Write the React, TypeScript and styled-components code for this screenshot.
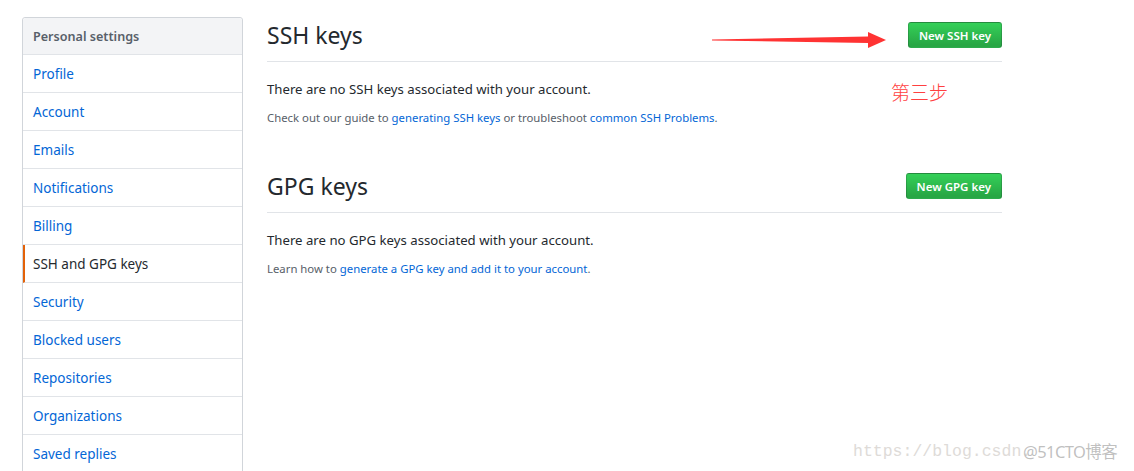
import React from "react";
import styled, { createGlobalStyle } from "styled-components";

const Global = createGlobalStyle`
  html, body { margin: 0; padding: 0; background: #fff; }
  body { font-family: "Noto Sans", "Liberation Sans", sans-serif; color: #24292e; overflow: hidden; }
  * { box-sizing: border-box; }
`;

const Page = styled.div`
  position: relative;
  width: 1134px;
  height: 471px;
  overflow: hidden;
  display: flex;
  align-items: flex-start;
  gap: 24px;
  padding: 17px 0 0 22px;
`;

const Menu = styled.nav`
  width: 221px;
  flex: none;
  border: 1px solid #d1d5da;
  border-radius: 3px 3px 0 0;
  background: #fff;
`;

const MenuHeading = styled.div`
  height: 37px;
  display: flex;
  align-items: center;
  padding-left: 10px;
  font-size: 12.6px;
  font-weight: 600;
  color: #586069;
  background: #f3f4f6;
  border-bottom: 1px solid #e1e4e8;
  border-radius: 3px 3px 0 0;
`;

const MenuItem = styled.a<{ $active?: boolean }>`
  display: flex;
  align-items: center;
  height: 38px;
  padding-left: ${(p) => (p.$active ? "8px" : "10px")};
  font-size: 13.5px;
  color: ${(p) => (p.$active ? "#24292e" : "#0366d6")};
  text-decoration: none;
  border-bottom: 1px solid #e1e4e8;
  border-left: ${(p) => (p.$active ? "2px solid #e36209" : "none")};
`;

const Main = styled.main`
  width: 735px;
  flex: none;
`;

const Section = styled.section`
  & + & { margin-top: 41px; }
`;

const Subhead = styled.div`
  display: flex;
  align-items: center;
  justify-content: space-between;
  padding-bottom: 8px;
  border-bottom: 1px solid #e1e4e8;
`;

const Title = styled.h2`
  margin: 0;
  font-size: 23px;
  font-weight: 400;
  line-height: 36px;
  color: #24292e;
`;

const Button = styled.button`
  height: 26px;
  padding: 0 10px;
  font-family: inherit;
  font-size: 11.5px;
  font-weight: 600;
  color: #fff;
  background-image: linear-gradient(-180deg, #34d058 0%, #28a745 90%);
  border: 1px solid rgba(27, 31, 35, 0.2);
  border-radius: 3px;
  cursor: pointer;
`;

const Blank = styled.p`
  margin: 17px 0 0;
  font-size: 13.2px;
  line-height: 21px;
  color: #24292e;
`;

const Note = styled.p`
  margin: 9px 0 0;
  font-size: 11.35px;
  line-height: 18px;
  color: #586069;
  a { color: #0366d6; text-decoration: none; }
`;

const Arrow = styled.svg`
  position: absolute;
  left: 710px;
  top: 28px;
`;

const Step = styled.div`
  position: absolute;
  left: 891px;
  top: 80px;
  font-family: "Noto Sans CJK SC", sans-serif;
  font-weight: 300;
  font-size: 19px;
  line-height: 24px;
  color: #ff4040;
`;

const Watermark = styled.div`
  position: absolute;
  left: 853px;
  top: 440px;
  font-family: "Liberation Mono", monospace;
  font-size: 16.5px;
  line-height: 24px;
  color: #dedbd8;
  white-space: nowrap;
`;

const Mark = styled.span`
  position: absolute;
  left: 170px;
  top: 0;
  font-family: "Noto Sans", "Noto Sans CJK SC", sans-serif;
  font-size: 16.5px;
  color: rgba(150, 150, 150, 0.6);
  letter-spacing: -0.6px;
`;

const items = [
  "Profile",
  "Account",
  "Emails",
  "Notifications",
  "Billing",
  "SSH and GPG keys",
  "Security",
  "Blocked users",
  "Repositories",
  "Organizations",
  "Saved replies",
];

export default function App() {
  return (
    <>
      <Global />
      <Page>
        <Menu>
          <MenuHeading>Personal settings</MenuHeading>
          {items.map((t) => (
            <MenuItem key={t} href="#" $active={t === "SSH and GPG keys"}>
              {t}
            </MenuItem>
          ))}
        </Menu>
        <Main>
          <Section>
            <Subhead>
              <Title>SSH keys</Title>
              <Button>New SSH key</Button>
            </Subhead>
            <Blank>There are no SSH keys associated with your account.</Blank>
            <Note>
              Check out our guide to <a href="#">generating SSH keys</a> or troubleshoot{" "}
              <a href="#">common SSH Problems</a>.
            </Note>
          </Section>
          <Section>
            <Subhead>
              <Title>GPG keys</Title>
              <Button>New GPG key</Button>
            </Subhead>
            <Blank>There are no GPG keys associated with your account.</Blank>
            <Note>
              Learn how to <a href="#">generate a GPG key and add it to your account</a>.
            </Note>
          </Section>
        </Main>
        <Arrow width="180" height="24" viewBox="0 0 180 24">
          <path d="M2 11.6 L158 8.5 L158 4 L176 12 L158 20 L158 15 L2 12.4 Z" fill="#ff3333" />
        </Arrow>
        <Step>第三步</Step>
        <Watermark>
          https://blog.csdn.
          <Mark>@51CTO博客</Mark>
        </Watermark>
      </Page>
    </>
  );
}
